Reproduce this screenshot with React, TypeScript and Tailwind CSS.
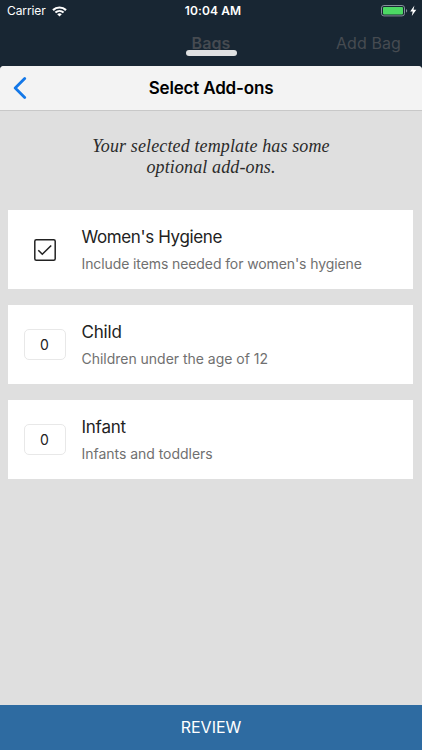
import { useState } from 'react'
import clsx from 'clsx'

type AddOn = {
  id: string
  title: string
  description: string
  kind: 'toggle' | 'count'
  titleClass: string
  descriptionClass: string
}

const ADD_ONS: AddOn[] = [
  {
    id: 'hygiene',
    title: "Women's Hygiene",
    description: "Include items needed for women's hygiene",
    kind: 'toggle',
    titleClass: 'tracking-[-0.38px]',
    descriptionClass: 'tracking-[-0.1px]',
  },
  {
    id: 'child',
    title: 'Child',
    description: 'Children under the age of 12',
    kind: 'count',
    titleClass: 'tracking-[-0.2px]',
    descriptionClass: 'tracking-[-0.02px]',
  },
  {
    id: 'infant',
    title: 'Infant',
    description: 'Infants and toddlers',
    kind: 'count',
    titleClass: 'tracking-[-0.25px]',
    descriptionClass: 'tracking-[-0.03px]',
  },
]

function WifiIcon() {
  return (
    <svg width="15" height="11" viewBox="0 0 15 11" fill="none" stroke="white">
      <path d="M1 4.1a9.4 9.4 0 0 1 13 0" strokeWidth="2.2" />
      <path d="M3.4 6.6a6 6 0 0 1 8.2 0" strokeWidth="2" />
      <path d="M7.5 10.6 5.2 8.3a3.3 3.3 0 0 1 4.6 0z" fill="white" stroke="none" />
    </svg>
  )
}

function BatteryIcon() {
  return (
    <svg width="36" height="12" viewBox="0 0 36 12" fill="none">
      <rect x="0.5" y="0.5" width="23" height="10.4" rx="2.4" stroke="#84909a" />
      <rect x="2" y="2" width="20" height="7.4" rx="1" fill="#4cd964" />
      <path d="M25 4v3.5c.8-.3 1.2-.9 1.2-1.75S25.8 4.3 25 4z" fill="#84909a" />
      <path d="M33.4.6 29.2 6.5h2.5l-.9 4.6 4.5-6.3h-2.8z" fill="white" />
    </svg>
  )
}

function StatusBar() {
  return (
    <div className="grid h-[22px] grid-cols-3 items-center pl-[7px] pr-[5px] text-white">
      <div className="flex items-center gap-[6px] text-[12px] tracking-[-0.1px]">
        Carrier
        <WifiIcon />
      </div>
      <div className="pl-[2px] text-center text-[12px] font-semibold tracking-[0.1px]">10:04 AM</div>
      <div className="flex justify-end">
        <BatteryIcon />
      </div>
    </div>
  )
}

function AddOnRow({ addOn }: { addOn: AddOn }) {
  const [checked, setChecked] = useState(true)

  return (
    <li className="flex h-[79px] bg-white">
      <div className="flex w-[73px] shrink-0 items-center justify-center">
        {addOn.kind === 'toggle' ? (
          <button onClick={() => setChecked(c => !c)} aria-label={addOn.title}>
            <svg width="22" height="22" viewBox="0 0 22 22" fill="none" stroke="#222">
              <rect x="0.8" y="0.8" width="20.4" height="20.4" rx="1.5" strokeWidth="1.5" />
              {checked && <path d="M4.3 11.3 8.3 15.2 17.2 6.5" strokeWidth="1.6" />}
            </svg>
          </button>
        ) : (
          <div className="flex h-[31px] w-[42px] items-center justify-center rounded-[5px] border border-[#e8e8e8] pb-px text-[14px] text-[#222]">
            0
          </div>
        )}
      </div>
      <div className="flex flex-col pt-4 pl-[0.5px] whitespace-nowrap">
        <span className={clsx('text-[17px] leading-[22px] text-[#222]', addOn.titleClass)}>{addOn.title}</span>
        <span className={clsx('mt-[6px] text-[14px] leading-5 text-[#707070]', addOn.descriptionClass)}>
          {addOn.description}
        </span>
      </div>
    </li>
  )
}

export default function App() {
  return (
    <div className="flex h-[750px] w-[422px] flex-col overflow-hidden bg-[#182633] font-['Inter',sans-serif]">
      <StatusBar />

      {/* Dimmed nav bar of the screen underneath */}
      <div className="relative grid h-11 shrink-0 grid-cols-3 items-center pb-[2px] text-[#464b51]">
        <span />
        <span className="text-center text-[16px] font-semibold tracking-[0.1px]">Bags</span>
        <span className="pr-[21px] text-right text-[16px] tracking-[0.1px]">Add Bag</span>
        <div className="absolute top-[28px] left-[186px] h-[6px] w-[51px] rounded-full bg-[#e0e1e2]" />
      </div>

      <main className="flex flex-1 flex-col overflow-hidden rounded-t-[4px] bg-[#dfdfdf]">
        <header className="grid h-[45px] shrink-0 grid-cols-[40px_1fr_40px] items-center border-b border-[#c8c8c8] bg-[#f3f3f3]">
          <button className="pl-[13px]" aria-label="Back">
            <svg width="14" height="22" viewBox="0 0 14 22" fill="none" stroke="#1478e8">
              <path d="M11.7 1.5 2.2 11l9.500 9.500" strokeWidth="2.800" strokeLinecap="round" strokeLinejoin="round" />
            </svg>
          </button>
          <h1 className="pt-[2px] text-center text-[17px] font-semibold tracking-[-0.17px] text-black">
            Select Add-ons
          </h1>
        </header>

        <p className="pt-[25px] text-center font-['Liberation_Serif',serif] text-[18px] leading-[21px] tracking-[0.13px] text-[#2b2b2b] italic">
          Your selected template has some
          <br />
          optional add-ons.
        </p>

        <ul className="mt-8 flex flex-1 flex-col gap-4 pr-[9px] pl-2">
          {ADD_ONS.map(addOn => (
            <AddOnRow key={addOn.id} addOn={addOn} />
          ))}
        </ul>

        <button className="h-[45px] shrink-0 bg-[#2e6ba1] pb-px text-[16px] text-white">REVIEW</button>
      </main>
    </div>
  )
}
